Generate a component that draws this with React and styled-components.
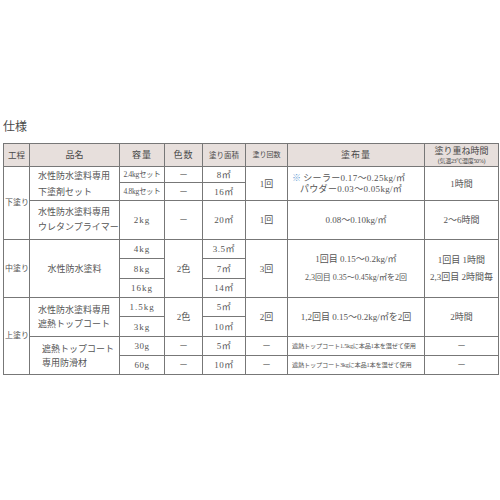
import React from 'react';
import styled, { createGlobalStyle } from 'styled-components';

const GlobalStyle = createGlobalStyle`
  html, body {
    margin: 0;
    padding: 0;
    background: #ffffff;
  }
  body {
    font-family: "Liberation Serif", "Noto Sans CJK JP", serif;
    color: #555;
  }
`;

const Page = styled.div`
  width: 500px;
  height: 500px;
  padding-top: 119px;
  box-sizing: border-box;
`;

const Title = styled.div`
  font-size: 12px;
  line-height: 16px;
  padding-left: 3px;
  margin-bottom: 8px;
  color: #4a4a4a;
`;

const Table = styled.table`
  border-collapse: collapse;
  table-layout: fixed;
  width: 495px;
  margin-left: 3px;
  border: 1px solid #666;
`;

const Row = styled.tr`
  height: ${p => p.$h}px;
`;

const Head = styled.th`
  background: #e7dfdc;
  border: 1px solid #777;
  font-weight: normal;
  font-size: ${p => p.$size || 9}px;
  letter-spacing: ${p => p.$ls || 0}px;
  line-height: 11px;
  padding: 0;
  text-align: center;
  color: #4a4a4a;
`;

const Note = styled.div`
  font-size: 6px;
  line-height: 8px;
  letter-spacing: -0.3px;
`;

const Cell = styled.td`
  border: 1px solid #777;
  padding: 0 0 0 ${p => p.$pl || 0}px;
  font-size: ${p => p.$size || 9}px;
  letter-spacing: ${p => p.$ls || 0}px;
  line-height: ${p => p.$lh || 12}px;
  text-align: ${p => p.$align || 'center'};
  vertical-align: middle;
  white-space: nowrap;
  overflow: hidden;
  color: #555;
`;

const Mark = styled.span`
  color: #6b9fd6;
  margin-right: 2px;
`;

const Indent = styled.div`
  padding-left: 8px;
`;

const Line = styled.div`
  font-size: ${p => p.$size || 9}px;
  line-height: ${p => p.$lh || 19}px;
  color: #555;
`;

const widths = [26, 90, 45, 38, 43, 42, 137, 74];

export default function App() {
  return (
    <Page>
      <GlobalStyle />
      <Title>仕様</Title>
      <Table>
        <colgroup>
          {widths.map((w, i) => <col key={i} style={{ width: w }} />)}
        </colgroup>
        <thead>
          <Row $h={23}>
            <Head $size={8.5}>工程</Head>
            <Head>品名</Head>
            <Head $ls={1}>容量</Head>
            <Head $ls={1}>色数</Head>
            <Head $size={7.5}>塗り面積</Head>
            <Head $size={7}>塗り回数</Head>
            <Head $ls={1}>塗布量</Head>
            <Head>
              塗り重ね時間
              <Note>(気温23℃湿度50%)</Note>
            </Head>
          </Row>
        </thead>
        <tbody>
          <Row $h={16}>
            <Cell rowSpan={3} $size={8} $align="left" $pl={1}>下塗り</Cell>
            <Cell rowSpan={2} $align="left" $pl={8} $lh={16}>水性防水塗料専用<br />下塗剤セット</Cell>
            <Cell $size={7.5} $ls={-0.3}>2.4kgセット</Cell>
            <Cell>－</Cell>
            <Cell $ls={0.5}>8㎡</Cell>
            <Cell rowSpan={2}>1回</Cell>
            <Cell rowSpan={2} $align="left" $pl={4} $lh={11} $ls={0.3}>
              <div><Mark>※</Mark>シーラー0.17～0.25kg/㎡</div>
              <Indent>パウダー0.03～0.05kg/㎡</Indent>
            </Cell>
            <Cell rowSpan={2}>1時間</Cell>
          </Row>
          <Row $h={18}>
            <Cell $size={7.5} $ls={-0.3}>4.8kgセット</Cell>
            <Cell>－</Cell>
            <Cell $ls={0.5}>16㎡</Cell>
          </Row>
          <Row $h={39}>
            <Cell $align="left" $pl={8} $lh={15}>水性防水塗料専用<br />ウレタンプライマー</Cell>
            <Cell $ls={1}>2kg</Cell>
            <Cell>－</Cell>
            <Cell $ls={0.5}>20㎡</Cell>
            <Cell>1回</Cell>
            <Cell>0.08～0.10kg/㎡</Cell>
            <Cell>2～6時間</Cell>
          </Row>

          <Row $h={19}>
            <Cell rowSpan={3} $size={8} $align="left" $pl={1}>中塗り</Cell>
            <Cell rowSpan={3}>水性防水塗料</Cell>
            <Cell $ls={1}>4kg</Cell>
            <Cell rowSpan={3}>2色</Cell>
            <Cell $ls={0.5}>3.5㎡</Cell>
            <Cell rowSpan={3}>3回</Cell>
            <Cell rowSpan={3}>
              <Line>1回目 0.15～0.2kg/㎡</Line>
              <Line $size={8} $lh={18}>2,3回目 0.35～0.45kg/㎡を2回</Line>
            </Cell>
            <Cell rowSpan={3}>
              <Line $lh={17}>1回目 1時間</Line>
              <Line $lh={17}>2,3回目 2時間毎</Line>
            </Cell>
          </Row>
          <Row $h={20}>
            <Cell $ls={1}>8kg</Cell>
            <Cell $ls={0.5}>7㎡</Cell>
          </Row>
          <Row $h={19}>
            <Cell $ls={1}>16kg</Cell>
            <Cell $ls={0.5}>14㎡</Cell>
          </Row>

          <Row $h={19}>
            <Cell rowSpan={4} $size={8} $align="left" $pl={1}>上塗り</Cell>
            <Cell rowSpan={2} $align="left" $pl={8} $lh={14}>水性防水塗料専用<br />遮熱トップコート</Cell>
            <Cell $ls={1}>1.5kg</Cell>
            <Cell rowSpan={2}>2色</Cell>
            <Cell $ls={0.5}>5㎡</Cell>
            <Cell rowSpan={2}>2回</Cell>
            <Cell rowSpan={2}>1,2回目 0.15～0.2kg/㎡を2回</Cell>
            <Cell rowSpan={2}>2時間</Cell>
          </Row>
          <Row $h={20}>
            <Cell $ls={1}>3kg</Cell>
            <Cell $ls={0.5}>10㎡</Cell>
          </Row>
          <Row $h={19}>
            <Cell rowSpan={2} $align="left" $pl={12} $lh={14}>遮熱トップコート<br />専用防滑材</Cell>
            <Cell $ls={0.5}>30g</Cell>
            <Cell>－</Cell>
            <Cell $ls={0.5}>5㎡</Cell>
            <Cell>－</Cell>
            <Cell $size={6.2} $align="left" $pl={4} $ls={-0.2}>遮熱トップコート1.5kgに本品1本を混ぜて使用</Cell>
            <Cell>－</Cell>
          </Row>
          <Row $h={19}>
            <Cell $ls={0.5}>60g</Cell>
            <Cell>－</Cell>
            <Cell $ls={0.5}>10㎡</Cell>
            <Cell>－</Cell>
            <Cell $size={6.2} $align="left" $pl={4} $ls={-0.2}>遮熱トップコート3kgに本品1本を混ぜて使用</Cell>
            <Cell>－</Cell>
          </Row>
        </tbody>
      </Table>
    </Page>
  );
}
